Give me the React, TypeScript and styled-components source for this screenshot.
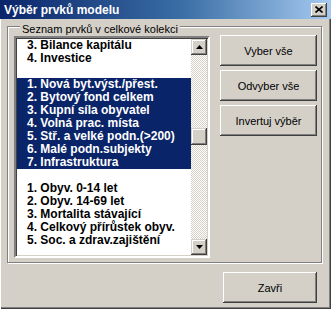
import styled, { createGlobalStyle } from 'styled-components';

const GlobalStyle = createGlobalStyle`
  html, body {
    margin: 0;
    padding: 0;
    background: #d4d0c8;
  }
  * {
    box-sizing: border-box;
  }
`

const Window = styled.div`
  width: 331px;
  height: 309px;
  display: flex;
  flex-direction: column;
  background: #d4d0c8;
  font-family: "Liberation Sans", Arial, sans-serif;
  font-size: 11px;
  color: #000;
  overflow: hidden;
`

const TitleBar = styled.div`
  height: 19px;
  display: flex;
  align-items: center;
  justify-content: space-between;
  padding: 0 4px 0 4px;
  background: linear-gradient(to right, #0a246a, #3a6ea5 55%, #a6caf0);
  color: #fff;
  font-weight: bold;
  font-size: 12px;
`

const CloseButton = styled.div`
  width: 16px;
  height: 14px;
  display: flex;
  align-items: center;
  justify-content: center;
  background: #d4d0c8;
  box-shadow: inset -1px -1px #404040, inset 1px 1px #fff, inset -2px -2px #808080;
`

const Body = styled.div`
  flex: 1;
  padding: 7px 8px 0 7px;
  box-shadow: inset 1px 0 #fff, inset -1px -1px #404040, inset -2px -2px #808080;
`

const Group = styled.div`
  position: relative;
  width: 315px;
  height: 237px;
  display: flex;
  gap: 10px;
  padding: 9px 4px 4px 6px;
  border: 1px solid #808080;
  box-shadow: 1px 1px 0 #fff, inset 1px 1px 0 #fff;
`

const Legend = styled.span`
  position: absolute;
  top: -4px;
  left: 12px;
  padding: 0 2px;
  line-height: 13px;
  background: #d4d0c8;
`

const ListBox = styled.div`
  width: 196px;
  height: 222px;
  display: flex;
  background: #fff;
  border: 2px solid;
  border-color: #808080 #fff #fff #808080;
  box-shadow: inset 1px 1px #404040, inset -1px -1px #d4d0c8;
  padding: 1px;
`

const Rows = styled.div`
  flex: 1;
  overflow: hidden;
`

type RowProps = { $selected: boolean };

const Row = styled.div<RowProps>`
  height: 13px;
  line-height: 13px;
  padding-left: 10px;
  font-weight: bold;
  font-size: 12px;
  white-space: pre;
  background: ${(p: RowProps) => (p.$selected ? '#0a246a' : 'transparent')};
  color: ${(p: RowProps) => (p.$selected ? '#fff' : '#000')};
`

const ScrollBar = styled.div`
  width: 16px;
  display: flex;
  flex-direction: column;
`

const ScrollButton = styled.div`
  width: 16px;
  height: 16px;
  display: flex;
  align-items: center;
  justify-content: center;
  background: #d4d0c8;
  box-shadow: inset -1px -1px #404040, inset 1px 1px #d4d0c8, inset -2px -2px #808080, inset 2px 2px #fff;
`

const Track = styled.div`
  flex: 1;
  background: repeating-conic-gradient(#fff 0 25%, #d4d0c8 0 50%) 0 0 / 2px 2px;
`

const Thumb = styled(ScrollButton)`
  height: 17px;
  margin-top: 73px;
`

const ButtonColumn = styled.div`
  display: flex;
  flex-direction: column;
  gap: 4px;
  margin-top: -1px;
`

type BtnProps = { $width: number };

const Button = styled.div<BtnProps>`
  width: ${(p: BtnProps) => p.$width}px;
  height: 31px;
  display: flex;
  align-items: center;
  justify-content: center;
  padding-top: 1px;
  background: #d4d0c8;
  box-shadow: inset -1px -1px #404040, inset 1px 1px #fff, inset -2px -2px #808080, inset 2px 2px #d4d0c8;
`

const Footer = styled.div`
  display: flex;
  justify-content: flex-end;
  padding: 9px 6px 0 0;
`

const UpArrow = () => (
  <svg width="7" height="4" viewBox="0 0 7 4"><polygon points="3.5,0 7,4 0,4" fill="#000" /></svg>
);

const DownArrow = () => (
  <svg width="7" height="4" viewBox="0 0 7 4"><polygon points="0,0 7,0 3.5,4" fill="#000" /></svg>
);

const CloseX = () => (
  <svg width="8" height="7" viewBox="0 0 8 7">
    <path d="M0.5 0.5 L7.5 6.5 M7.5 0.5 L0.5 6.5" stroke="#000" strokeWidth="1.6" />
  </svg>
);

function App() {
  const items = [
    { text: '3. Bilance kapitálu', selected: false },
    { text: '4. Investice', selected: false },
    { text: '', selected: false },
    { text: '1. Nová byt.výst./přest.', selected: true },
    { text: '2. Bytový fond celkem', selected: true },
    { text: '3. Kupní síla obyvatel', selected: true },
    { text: '4. Volná prac. místa', selected: true },
    { text: '5. Stř. a velké podn.(>200)', selected: true },
    { text: '6. Malé podn.subjekty', selected: true },
    { text: '7. Infrastruktura', selected: true },
    { text: '', selected: false },
    { text: '1. Obyv. 0-14 let', selected: false },
    { text: '2. Obyv. 14-69 let', selected: false },
    { text: '3. Mortalita stávající', selected: false },
    { text: '4. Celkový přírůstek obyv.', selected: false },
    { text: '5. Soc. a zdrav.zajištění', selected: false }
  ];

  return (
    <>
      <GlobalStyle />
      <Window>
        <TitleBar>
          <span>Výběr prvků modelu</span>
          <CloseButton><CloseX /></CloseButton>
        </TitleBar>
        <Body>
          <Group>
            <Legend>Seznam prvků v celkové kolekci</Legend>
            <ListBox>
              <Rows>
                {items.map((item, i) => (
                  <Row key={i} $selected={item.selected}>{item.text}</Row>
                ))}
              </Rows>
              <ScrollBar>
                <ScrollButton><UpArrow /></ScrollButton>
                <Track><Thumb /></Track>
                <ScrollButton><DownArrow /></ScrollButton>
              </ScrollBar>
            </ListBox>
            <ButtonColumn>
              <Button $width={97}>Vyber vše</Button>
              <Button $width={97}>Odvyber vše</Button>
              <Button $width={97}>Invertuj výběr</Button>
            </ButtonColumn>
          </Group>
          <Footer>
            <Button $width={94}>Zavři</Button>
          </Footer>
        </Body>
      </Window>
    </>
  );
}

export default App;
